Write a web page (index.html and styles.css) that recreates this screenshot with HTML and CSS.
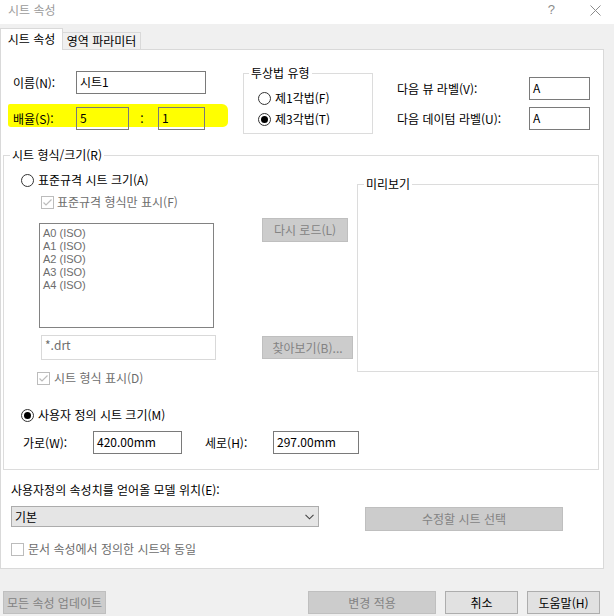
FILE: index.html
```html
<!DOCTYPE html>
<html lang="ko">
<head>
<meta charset="utf-8">
<title>시트 속성</title>
<link rel="stylesheet" href="styles.css">
</head>
<body>
<div class="window">
  <header class="titlebar">
    <span class="title">시트 속성</span>
    <span class="help">?</span>
    <svg class="close" width="11" height="11" viewBox="0 0 11 11"><path d="M0.5 0.5 L10.5 10.5 M10.5 0.5 L0.5 10.5" stroke="#8c8c8c" stroke-width="1" fill="none"/></svg>
  </header>
  <nav class="tabs">
    <div class="tab tab-active">시트 속성</div>
    <div class="tab">영역 파라미터</div>
  </nav>
  <main class="panel">
    <section class="top">
      <div class="ident">
        <div class="irow">
          <span class="ilabel">이름(N):</span>
          <div class="field w-name">시트1</div>
        </div>
        <div class="irow irow-scale">
          <span class="ilabel">배율(S):</span>
          <div class="field field-clear w-s1">5</div>
          <span class="colon">:</span>
          <div class="field field-clear w-s2">1</div>
        </div>
      </div>
      <div class="group proj">
        <span class="legend legend-proj">투상법 유형</span>
        <div class="opt"><span class="radio"></span><span>제1각법(F)</span></div>
        <div class="opt opt-2"><span class="radio radio-on"></span><span>제3각법(T)</span></div>
      </div>
      <div class="labels">
        <div class="lrow"><span class="llabel">다음 뷰 라벨(V):</span><div class="field w-lab">A</div></div>
        <div class="lrow lrow-2"><span class="llabel">다음 데이텀 라벨(U):</span><div class="field w-lab">A</div></div>
      </div>
    </section>

    <section class="group sheet">
      <span class="legend legend-sheet">시트 형식/크기(R)</span>
      <div class="sheet-upper">
        <div class="sheet-left">
          <div class="opt opt-std"><span class="radio"></span><span>표준규격 시트 크기(A)</span></div>
          <div class="chk chk-std">
            <span class="cbox"><svg width="11" height="11" viewBox="0 0 11 11"><polyline points="1.5,5.5 4,8 9.5,2.5" fill="none" stroke="#bcbcbc" stroke-width="1.2"/></svg></span>
            <span class="dim">표준규격 형식만 표시(F)</span>
          </div>
          <div class="list-row">
            <ul class="listbox">
              <li>A0 (ISO)</li>
              <li>A1 (ISO)</li>
              <li>A2 (ISO)</li>
              <li>A3 (ISO)</li>
              <li>A4 (ISO)</li>
            </ul>
            <button class="btn btn-dis btn-reload">다시 로드(L)</button>
          </div>
          <div class="drt-row">
            <div class="field field-dis w-drt">*.drt</div>
            <button class="btn btn-dis btn-browse">찾아보기(B)...</button>
          </div>
          <div class="chk chk-show">
            <span class="cbox"><svg width="11" height="11" viewBox="0 0 11 11"><polyline points="1.5,5.5 4,8 9.5,2.5" fill="none" stroke="#bcbcbc" stroke-width="1.2"/></svg></span>
            <span class="dim">시트 형식 표시(D)</span>
          </div>
        </div>
        <div class="group preview"><span class="legend legend-prev">미리보기</span></div>
      </div>
      <div class="opt opt-custom"><span class="radio radio-on"></span><span>사용자 정의 시트 크기(M)</span></div>
      <div class="size-row">
        <span class="slabel">가로(W):</span><div class="field w-width">420.00mm</div>
        <span class="slabel slabel-h">세로(H):</span><div class="field w-height">297.00mm</div>
      </div>
    </section>

    <div class="model-label">사용자정의 속성치를 얻어올 모델 위치(E):</div>
    <div class="model-row">
      <div class="select"><span>기본</span><svg width="9" height="6" viewBox="0 0 9 6"><polyline points="0.5,0.8 4.5,4.8 8.5,0.8" fill="none" stroke="#444" stroke-width="1.1"/></svg></div>
      <button class="btn btn-dis btn-pick">수정할 시트 선택</button>
    </div>
    <div class="chk chk-doc"><span class="cbox"></span><span class="dim">문서 속성에서 정의한 시트와 동일</span></div>
  </main>
  <footer class="footer">
    <button class="btn btn-dis btn-update">모든 속성 업데이트</button>
    <button class="btn btn-dis btn-apply">변경 적용</button>
    <button class="btn btn-cancel">취소</button>
    <button class="btn btn-helpb">도움말(H)</button>
  </footer>
</div>
</body>
</html>
```
FILE: styles.css
```css
* { box-sizing: border-box; }
html, body { margin: 0; padding: 0; }
body {
  width: 614px;
  height: 616px;
  overflow: hidden;
  background: #f0f0f0;
  font-family: "Noto Sans CJK KR", "Malgun Gothic", "Noto Sans", sans-serif;
  font-size: 12px;
  line-height: 16px;
  color: #000;
}
.window { width: 614px; height: 616px; }

/* title bar */
.titlebar { height: 24px; background: #fff; display: flex; align-items: center; }
.title { margin-left: 8px; color: #9b9b9b; padding-bottom: 4px; }
.help { margin-left: auto; color: #8c8c8c; font-size: 13px; font-family: "Liberation Sans", sans-serif; padding-bottom: 4px; }
.close { margin-left: 35px; margin-right: 13px; margin-bottom: 3px; }

/* tabs */
.tabs { height: 25px; display: flex; align-items: flex-end; }
.tab {
  height: 17px; width: 78px;
  border: 1px solid #d9d9d9; border-left: none; border-bottom: none;
  background: #f0f0f0;
  display: flex; align-items: center; justify-content: center;
  line-height: 14px; padding-bottom: 1px;
}
.tab-active {
  height: 22px; width: 63px;
  border-left: 1px solid #d9d9d9;
  background: #fff;
  margin-bottom: -1px;
  position: relative; z-index: 1;
  padding-bottom: 2px;
}

/* panel */
.panel { width: 604px; height: 520px; background: #fff; border: 1px solid #d9d9d9; }
.top { display: flex; height: 105px; }
.ident { margin-left: 12px; padding-top: 21px; width: 192px; flex: none; }
.irow { display: flex; align-items: center; height: 23px; }
.irow-scale { margin-top: 13px; position: relative; z-index: 0; }
.irow-scale::before {
  content: ""; position: absolute; left: -5px; top: -3px;
  width: 220px; height: 23px; background: #ffff00; z-index: -1;
  border-radius: 2px 6px 5px 3px;
}
.ilabel { width: 63px; flex: none; }
.field {
  height: 23px; border: 1px solid #7a7a7a; background: #fff;
  padding: 2px 3px 0; line-height: 16px; white-space: nowrap; flex: none;
}
.field-clear { background: transparent; }
.field-dis { border-color: #d9d9d9; color: #6d6d6d; }
.w-name { width: 130px; }
.w-s1 { width: 53px; }
.colon { width: 29px; text-align: center; padding-right: 3px; }
.w-s2 { width: 47px; }

/* group boxes */
.group { border: 1px solid #dcdcdc; position: relative; }
.legend { position: absolute; top: -9px; background: #fff; padding: 0 2px; line-height: 16px; white-space: nowrap; }
.proj { margin-left: 38px; margin-top: 23px; width: 130px; height: 61px; padding: 16px 0 0 14px; flex: none; }
.legend-proj { left: 5px; }

.opt { display: flex; align-items: center; height: 16px; white-space: nowrap; }
.opt-2 { margin-top: 5px; }
.radio {
  width: 13px; height: 13px; flex: none;
  border: 1px solid #333; border-radius: 50%; background: #fff;
  display: flex; align-items: center; justify-content: center;
  margin-right: 4px;
}
.radio-on::after { content: ""; width: 7px; height: 7px; border-radius: 50%; background: #000; }

.labels { margin-left: 24px; margin-top: 27px; }
.lrow { display: flex; align-items: center; height: 23px; }
.lrow-2 { margin-top: 7px; }
.llabel { width: 132px; white-space: nowrap; }
.w-lab { width: 61px; }

/* sheet group */
.sheet { margin-left: 2px; width: 596px; padding-bottom: 15px; }
.legend-sheet { left: 6px; }
.sheet-upper { display: flex; height: 230px; }
.sheet-left { width: 353px; flex: none; }
.opt-std { margin-top: 16px; padding-left: 17px; }
.chk { display: flex; align-items: center; height: 16px; white-space: nowrap; }
.cbox {
  width: 13px; height: 13px; flex: none;
  border: 1px solid #bcbcbc; background: #fff;
  display: flex; align-items: center; justify-content: center;
  margin-right: 4px;
}
.dim { color: #6d6d6d; }
.chk-std { margin-top: 6px; padding-left: 37px; }
.chk-std .cbox { margin-right: 3px; }
.list-row { display: flex; align-items: flex-start; margin-top: 8px; }
.listbox {
  margin: 5px 0 0 35px; width: 175px; height: 105px;
  border: 1px solid #828282; padding: 3px 0 0 3px;
  list-style: none; color: #6d6d6d; flex: none;
  font-family: "Liberation Sans", Arial, sans-serif;
  font-size: 11px; line-height: 13px;
}
.listbox li { height: 13px; }
.drt-row { display: flex; align-items: flex-start; margin-top: 7px; }
.w-drt { margin-left: 37px; width: 175px; height: 25px; padding-top: 1px; }
.chk-show { margin-top: 10px; padding-left: 33px; }
.preview { margin-top: 28px; width: 241px; height: 188px; border-right: none; flex: none; }
.legend-prev { left: 6px; }
.opt-custom { margin-top: 21px; padding-left: 17px; }
.size-row { display: flex; align-items: center; margin-top: 8px; padding-left: 19px; height: 23px; }
.slabel { width: 70px; flex: none; }
.slabel-h { margin-left: 23px; width: 68px; }
.w-width { width: 89px; }
.w-height { width: 86px; }

/* model location */
.model-label { margin: 12px 0 0 10px; height: 16px; white-space: nowrap; }
.model-row { display: flex; align-items: flex-start; margin: 8px 0 0 10px; }
.select {
  width: 308px; height: 21px; flex: none;
  border: 1px solid #acacac; background: #e5e5e5;
  display: flex; align-items: center; justify-content: space-between;
  padding: 0 4px 0 3px;
}
.chk-doc { margin: 10px 0 0 10px; }

/* buttons */
.btn {
  font: inherit; line-height: 14px; padding: 0; margin: 0;
  border: 1px solid #adadad; background: #e1e1e1; color: #000;
  display: flex; align-items: center; justify-content: center;
  white-space: nowrap; flex: none;
}
.btn-dis { background: #cccccc; border-color: #bfbfbf; color: #838383; }
.btn-reload { margin-left: 48px; width: 86px; height: 24px; }
.btn-browse { margin-left: 46px; margin-top: 1px; width: 91px; height: 23px; }
.btn-pick { margin-left: 46px; margin-top: 1px; width: 198px; height: 24px; }

.footer { display: flex; padding-top: 22px; }
.btn-update { margin-left: 3px; width: 103px; height: 23px; }
.btn-apply { margin-left: 202px; width: 128px; height: 23px; }
.btn-cancel { margin-left: 9px; width: 73px; height: 23px; }
.btn-helpb { margin-left: 9px; width: 73px; height: 23px; }
```
